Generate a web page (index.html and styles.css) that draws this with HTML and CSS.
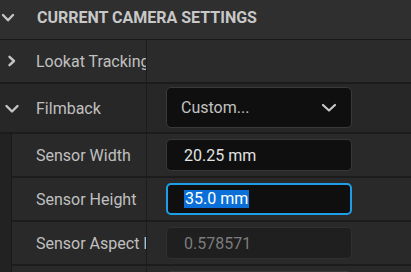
FILE: index.html
```html
<!DOCTYPE html>
<html>
<head>
<meta charset="utf-8">
<link rel="stylesheet" href="styles.css">
</head>
<body>
<div class="panel">
  <div class="header">
    <span class="hchev"><svg width="14" height="10" viewBox="0 0 14 10"><path d="M2 2 L7 7.3 L12 2" fill="none" stroke="#c4c4c4" stroke-width="2.4" stroke-linecap="round" stroke-linejoin="round"/></svg></span>
    <span class="title">CURRENT CAMERA SETTINGS</span>
  </div>

  <div class="row row-lookat">
    <div class="name">
      <span class="chev chev-right"><svg width="10" height="12" viewBox="0 0 10 12"><path d="M2.5 1.8 L7 6 L2.5 10.2" fill="none" stroke="#c4c4c4" stroke-width="2.4" stroke-linecap="round" stroke-linejoin="round"/></svg></span>
      <span class="label">Lookat Tracking</span>
    </div>
    <div class="value"></div>
  </div>

  <div class="row row-filmback">
    <div class="name">
      <span class="chev chev-down"><svg width="16" height="10" viewBox="0 0 16 10"><path d="M2.5 2 L8 7.5 L13.5 2" fill="none" stroke="#c4c4c4" stroke-width="2.4" stroke-linecap="round" stroke-linejoin="round"/></svg></span>
      <span class="label">Filmback</span>
    </div>
    <div class="value">
      <div class="combo">
        <span class="combo-text">Custom...</span>
        <svg class="combo-chev" width="16" height="10" viewBox="0 0 16 10"><path d="M2 2 L8 7.5 L14 2" fill="none" stroke="#c8c8c8" stroke-width="2.2" stroke-linecap="round" stroke-linejoin="round"/></svg>
      </div>
    </div>
  </div>

  <div class="group">
    <div class="indent"></div>
    <div class="children">
      <div class="row child">
        <div class="name"><span class="label">Sensor Width</span></div>
        <div class="value"><div class="field">20.25 mm</div></div>
      </div>
      <div class="row child">
        <div class="name"><span class="label">Sensor Height</span></div>
        <div class="value"><div class="field focused"><span class="sel">35.0 mm</span></div></div>
      </div>
      <div class="row child">
        <div class="name"><span class="label">Sensor Aspect Ratio</span></div>
        <div class="value"><div class="field disabled">0.578571</div></div>
      </div>
      <div class="row child">
        <div class="name"></div>
        <div class="value"><div class="field"></div></div>
      </div>
    </div>
  </div>
</div>
</body>
</html>
```

FILE: styles.css
```css
html, body {
  margin: 0;
  padding: 0;
  background: #1c1c1c;
  overflow: hidden;
}
body {
  width: 411px;
  height: 272px;
  font-family: Roboto, "Liberation Sans", sans-serif;
  font-size: 16px;
  color: #c0c0c0;
}
.panel {
  display: flex;
  flex-direction: column;
  gap: 2px;
}
.header {
  height: 35px;
  padding-bottom: 4px;
  background: #2f2f2f;
  border-bottom: 1px solid #1a1a1a;
  margin-bottom: -2px;
  display: flex;
  align-items: center;
}
.hchev {
  display: flex;
  width: 37px;
  padding-left: 1px;
  box-sizing: border-box;
}
.title {
  font-weight: 700;
  color: #c8c8c8;
}
.row {
  display: flex;
  background: #292929;
}
.row-lookat {
  height: 42px;
  background: #2b2b2b;
}
.row-filmback {
  height: 48px;
  background: #272727;
}
.name {
  width: 146px;
  flex: none;
  display: flex;
  align-items: center;
  overflow: hidden;
  white-space: nowrap;
}
.chev {
  display: flex;
  flex: none;
  width: 36px;
  box-sizing: border-box;
}
.chev-right { padding-left: 7px; }
.chev-down { padding-left: 4px; padding-top: 1px; }
.label {
  color: #c0c0c0;
  white-space: nowrap;
}
.value {
  flex: 1;
  border-left: 1px solid #1c1c1c;
  padding-left: 19px;
  display: flex;
  align-items: center;
}
.row-filmback .value {
  align-items: flex-start;
  padding-top: 3px;
}
.combo {
  width: 186px;
  height: 41px;
  box-sizing: border-box;
  background: #0f0f0f;
  border: 1px solid #3a3a3a;
  border-radius: 5px;
  display: flex;
  align-items: center;
  padding-left: 14px;
  padding-right: 14px;
}
.combo-text {
  flex: 1;
  color: #c2c2c2;
}
.combo-chev { display: block; }
.group {
  display: flex;
}
.indent {
  width: 11px;
  flex: none;
  background: #222222;
  border-right: 1px solid #1a1a1a;
}
.children {
  flex: 1;
  display: flex;
  flex-direction: column;
  gap: 2px;
}
.child {
  height: 42px;
}
.child .name {
  width: 134px;
  padding-left: 24px;
  box-sizing: border-box;
}
.field {
  width: 186px;
  height: 32px;
  box-sizing: border-box;
  background: #0f0f0f;
  border: 1px solid #383838;
  border-radius: 5px;
  display: flex;
  align-items: center;
  padding-left: 17px;
  color: #e2e2e2;
}
.field.focused {
  border: 2px solid #1d9fe8;
  padding-left: 16px;
}
.sel {
  background: #0b6fd8;
  color: #ffffff;
  line-height: 18px;
  padding: 0 1px;
}
.field.disabled {
  background: #1f1f1f;
  border-color: #303030;
  color: #7c7c7c;
}
```
